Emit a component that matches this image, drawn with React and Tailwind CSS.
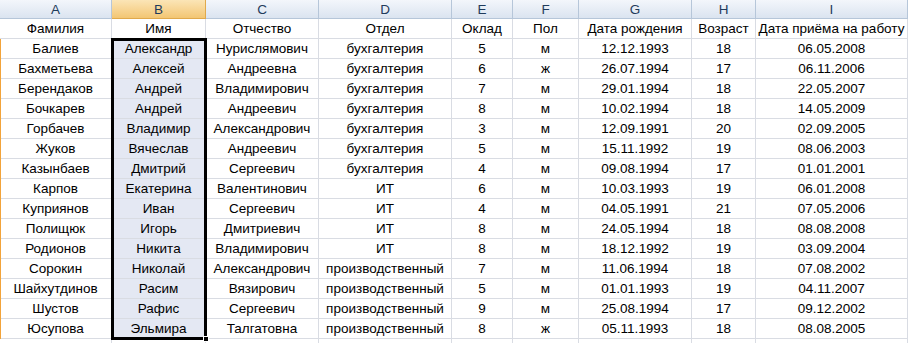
const cols = [
  { key: 'A', w: 112 },
  { key: 'B', w: 94 },
  { key: 'C', w: 113 },
  { key: 'D', w: 133 },
  { key: 'E', w: 61 },
  { key: 'F', w: 66 },
  { key: 'G', w: 113 },
  { key: 'H', w: 64 },
  { key: 'I', w: 152 },
];

const head = ['Фамилия', 'Имя', 'Отчество', 'Отдел', 'Оклад', 'Пол', 'Дата рождения', 'Возраст', 'Дата приёма на работу'];

const rows = [
  ['Балиев', 'Александр', 'Нурислямович', 'бухгалтерия', '5', 'м', '12.12.1993', '18', '06.05.2008'],
  ['Бахметьева', 'Алексей', 'Андреевна', 'бухгалтерия', '6', 'ж', '26.07.1994', '17', '06.11.2006'],
  ['Берендаков', 'Андрей', 'Владимирович', 'бухгалтерия', '7', 'м', '29.01.1994', '18', '22.05.2007'],
  ['Бочкарев', 'Андрей', 'Андреевич', 'бухгалтерия', '8', 'м', '10.02.1994', '18', '14.05.2009'],
  ['Горбачев', 'Владимир', 'Александрович', 'бухгалтерия', '3', 'м', '12.09.1991', '20', '02.09.2005'],
  ['Жуков', 'Вячеслав', 'Андреевич', 'бухгалтерия', '5', 'м', '15.11.1992', '19', '08.06.2003'],
  ['Казынбаев', 'Дмитрий', 'Сергеевич', 'бухгалтерия', '4', 'м', '09.08.1994', '17', '01.01.2001'],
  ['Карпов', 'Екатерина', 'Валентинович', 'ИТ', '6', 'м', '10.03.1993', '19', '06.01.2008'],
  ['Куприянов', 'Иван', 'Сергеевич', 'ИТ', '4', 'м', '04.05.1991', '21', '07.05.2006'],
  ['Полищюк', 'Игорь', 'Дмитриевич', 'ИТ', '8', 'м', '24.05.1994', '18', '08.08.2008'],
  ['Родионов', 'Никита', 'Владимирович', 'ИТ', '8', 'м', '18.12.1992', '19', '03.09.2004'],
  ['Сорокин', 'Николай', 'Александрович', 'производственный', '7', 'м', '11.06.1994', '18', '07.08.2002'],
  ['Шайхутдинов', 'Расим', 'Вязирович', 'производственный', '5', 'м', '01.01.1993', '19', '04.11.2007'],
  ['Шустов', 'Рафис', 'Сергеевич', 'производственный', '9', 'м', '25.08.1994', '17', '09.12.2002'],
  ['Юсупова', 'Эльмира', 'Талгатовна', 'производственный', '8', 'ж', '05.11.1993', '18', '08.08.2005'],
];

function Cell({ w, selected, children }) {
  return (
    <div
      style={{ width: w }}
      className={`h-[20px] shrink-0 border-r border-b border-[#d9dce3] flex items-center justify-center overflow-hidden whitespace-nowrap ${selected ? 'bg-[#e4e8f3]' : 'bg-white'}`}
    >
      {children}
    </div>
  );
}

export default function App() {
  return (
    <div className="relative w-[910px] h-[343px] overflow-hidden bg-white text-[13.5px] leading-none text-black" style={{ fontFamily: '"Liberation Sans", Arial, sans-serif' }}>
      {/* column letters */}
      <div className="flex">
        {cols.map((c) => (
          <div
            key={c.key}
            style={{ width: c.w }}
            className={`h-[19px] shrink-0 border-r border-b flex items-center justify-center pt-px text-[#1f3b5c] ${c.key === 'B' ? 'bg-gradient-to-b from-[#fbe5b6] to-[#f3c673] border-[#e0a94c]' : 'bg-gradient-to-b from-[#f3f6fb] to-[#dbe4f0] border-[#b6c6d9]'}`}
          >
            {c.key}
          </div>
        ))}
      </div>

      {/* header labels */}
      <div className="flex">
        {cols.map((c, i) => (
          <Cell key={c.key} w={c.w}>{head[i]}</Cell>
        ))}
      </div>

      {/* data */}
      {rows.map((r, ri) => (
        <div key={ri} className="flex">
          {cols.map((c, i) => (
            <Cell key={c.key} w={c.w} selected={i === 1}>{r[i]}</Cell>
          ))}
        </div>
      ))}

      <div className="flex">
        {cols.map((c) => (
          <Cell key={c.key} w={c.w} />
        ))}
      </div>

      {/* row selection marker on the left edge */}
      <div className="absolute left-0 top-[39px] w-px h-[300px] bg-[#f2a33a]" />

      {/* selection border + fill handle */}
      <div className="absolute left-[111px] top-[38px] w-[96px] h-[302px] border-[3px] border-black pointer-events-none" />
      <div className="absolute left-[203px] top-[336px] w-[6px] h-[6px] bg-black border border-white" />
    </div>
  );
}
